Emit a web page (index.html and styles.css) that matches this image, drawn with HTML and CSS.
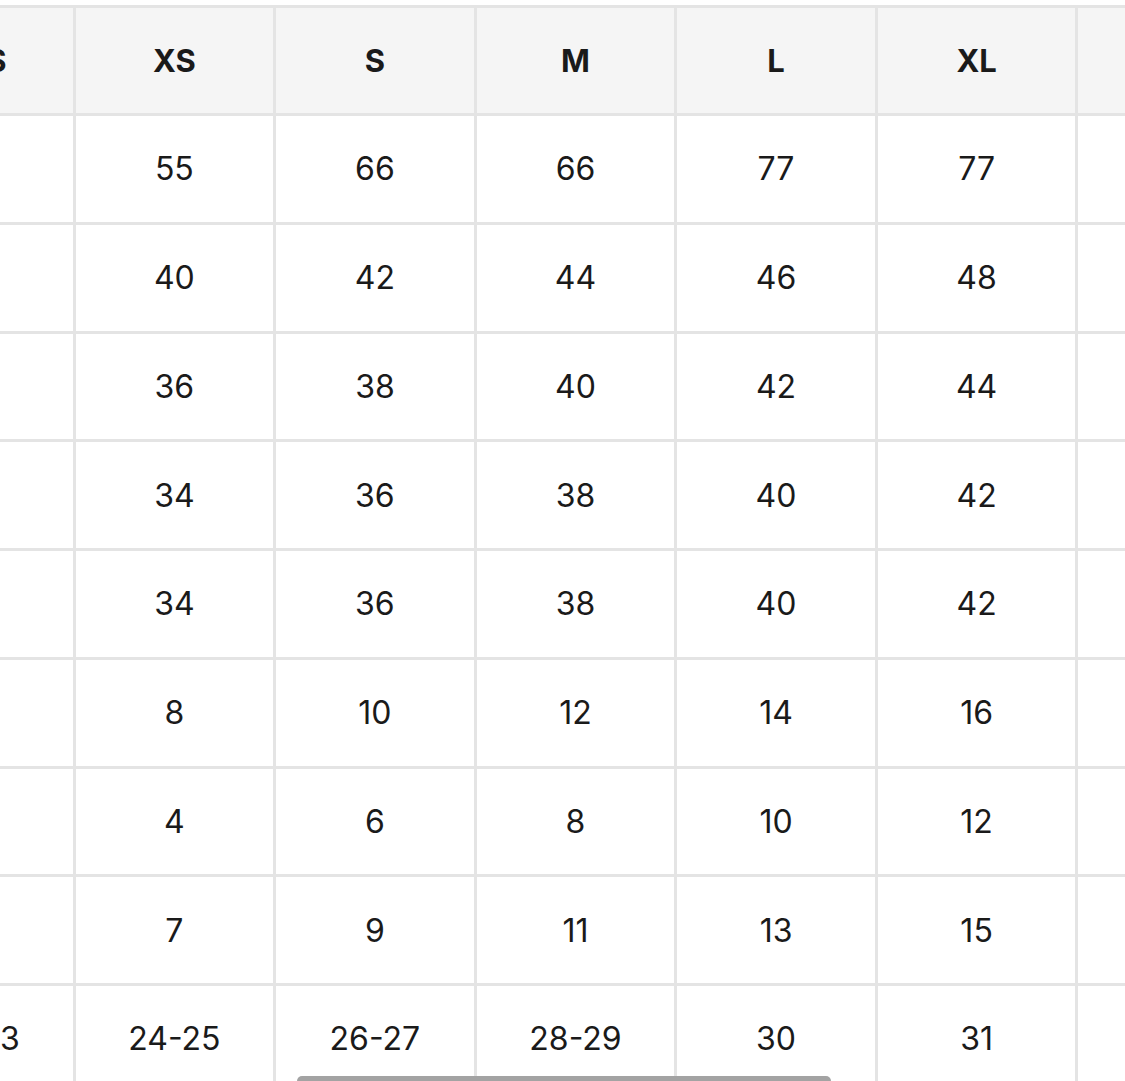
FILE: index.html
```html
<!DOCTYPE html>
<html>
<head>
<meta charset="utf-8">
<link rel="stylesheet" href="styles.css">
</head>
<body>
<div class="viewport">
  <table class="sizes">
    <thead>
      <tr><th>XXS</th><th>XS</th><th>S</th><th>M</th><th>L</th><th>XL</th><th>XXL</th></tr>
    </thead>
    <tbody>
      <tr><td>44</td><td>55</td><td>66</td><td>66</td><td>77</td><td>77</td><td>88</td></tr>
      <tr><td>38</td><td>40</td><td>42</td><td>44</td><td>46</td><td>48</td><td>50</td></tr>
      <tr><td>34</td><td>36</td><td>38</td><td>40</td><td>42</td><td>44</td><td>46</td></tr>
      <tr><td>32</td><td>34</td><td>36</td><td>38</td><td>40</td><td>42</td><td>44</td></tr>
      <tr><td>32</td><td>34</td><td>36</td><td>38</td><td>40</td><td>42</td><td>44</td></tr>
      <tr><td>6</td><td>8</td><td>10</td><td>12</td><td>14</td><td>16</td><td>18</td></tr>
      <tr><td>2</td><td>4</td><td>6</td><td>8</td><td>10</td><td>12</td><td>14</td></tr>
      <tr><td>5</td><td>7</td><td>9</td><td>11</td><td>13</td><td>15</td><td>17</td></tr>
      <tr><td>22-23</td><td>24-25</td><td>26-27</td><td>28-29</td><td>30</td><td>31</td><td>32</td></tr>
    </tbody>
  </table>
  <div class="scrollbar"></div>
</div>
</body>
</html>
```

FILE: styles.css
```css
html, body {
  margin: 0;
  padding: 0;
  background: #ffffff;
}
.viewport {
  position: relative;
  width: 1125px;
  height: 1081px;
  overflow: hidden;
  padding-top: 5px;
  box-sizing: border-box;
}
.sizes {
  border-collapse: collapse;
  margin-left: -128px;
  width: 1407px;
  min-width: 1407px;
  table-layout: fixed;
  font-family: Inter, "Liberation Sans", sans-serif;
  color: #1a1a1a;
}
.sizes th, .sizes td {
  border: 3px solid #e4e4e4;
  text-align: center;
  vertical-align: middle;
  padding: 0;
}
.sizes th {
  height: 105px;
  background: #f5f5f5;
  font-weight: 700;
  font-size: 31px;
}
.sizes td {
  height: 105.75px;
  font-size: 32px;
  font-weight: 400;
}
.scrollbar {
  position: absolute;
  left: 297px;
  top: 1076px;
  width: 534px;
  height: 10px;
  border-radius: 5px;
  background: #a3a3a3;
}
```
